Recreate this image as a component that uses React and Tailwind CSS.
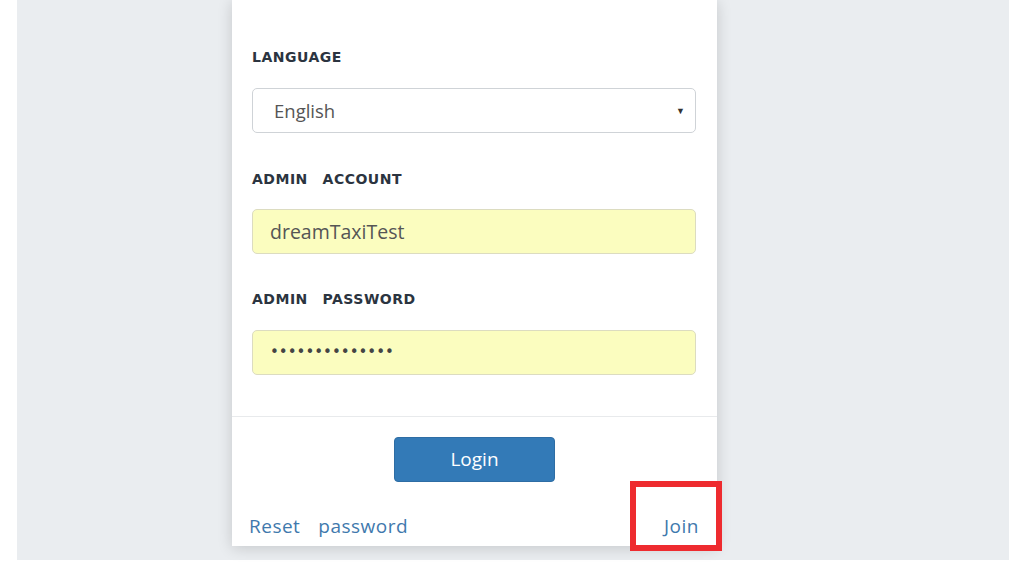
import React from 'react';

const labelCls = "block h-5 leading-5 text-[14px] font-bold text-[#2b3440] tracking-[0.5px] [word-spacing:2px] whitespace-pre font-['DejaVu_Sans',sans-serif]";
const fieldFont = "font-['Open_Sans',sans-serif]";

const App = () => {
  return (
    <div className="relative w-[1012px] h-[562px] bg-white overflow-hidden">
      <div className="ml-[17px] mt-[2px] w-[992px] h-[560px] bg-[#eaedf0]">
        <div className="-mt-[2px] ml-[215px] w-[485px] bg-white shadow-[0_2px_14px_rgba(0,0,0,0.16)]">
          {/* Form body */}
          <div className="pt-[47px] pb-[41px] pl-5 pr-[21px]">
            <label className={labelCls}>LANGUAGE</label>
            <div className="mt-[21px] h-[45px] flex items-center justify-between pl-[21px] pr-[10px] border border-[#cfd3d7] rounded-[5px] bg-white">
              <span className={`text-[18.5px] text-[#555] ${fieldFont}`}>English</span>
              <span className="text-[9px] text-[#333]">▼</span>
            </div>

            <label className={`${labelCls} mt-9`}>{'ADMIN  ACCOUNT'}</label>
            <div className="mt-5 h-[45px] flex items-center pl-[17px] border border-[#dcdcc0] rounded-[5px] bg-[#fbfdbf]">
              <span className={`text-[19.5px] text-[#555] ${fieldFont}`}>dreamTaxiTest</span>
            </div>

            <label className={`${labelCls} mt-[35px]`}>{'ADMIN  PASSWORD'}</label>
            <div className="mt-[21px] h-[45px] flex items-center pl-[17px] border border-[#dcdcc0] rounded-[5px] bg-[#fbfdbf]">
              <span className="text-[15px] text-[#444] font-['DejaVu_Sans',sans-serif]">••••••••••••••</span>
            </div>
          </div>

          {/* Footer */}
          <div className="border-t border-[#e8eaec] pt-5 pb-2">
            <div className="flex justify-center">
              <button className={`w-[161px] h-[45px] rounded-[4px] bg-[#337ab7] border border-[#2e6da4] text-white text-[19px] ${fieldFont}`}>
                Login
              </button>
            </div>
            <div className={`mt-8 flex justify-between pl-[17px] pr-[18px] h-6 leading-6 text-[19px] text-[#3f79ad] tracking-[0.5px] [word-spacing:3.5px] whitespace-pre ${fieldFont}`}>
              <a href="#">{'Reset  password'}</a>
              <a href="#">Join</a>
            </div>
          </div>
        </div>
      </div>

      {/* annotation box */}
      <div className="absolute left-[630px] top-[481px] w-[92px] h-[70px] border-[6px] border-[#ee2b2f]" />
    </div>
  );
};

export default App;
